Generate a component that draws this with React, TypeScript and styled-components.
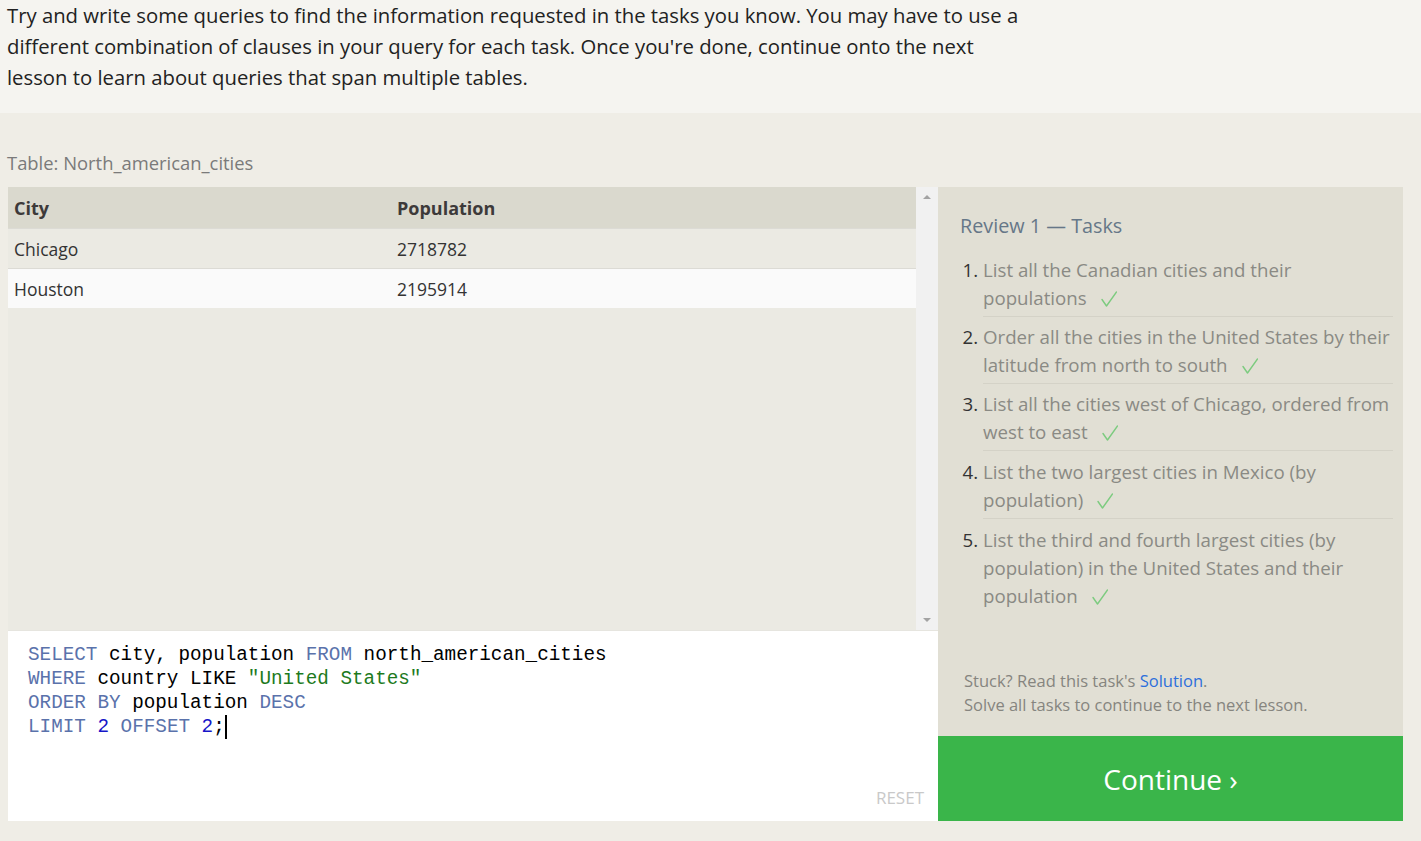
import React from "react";
import styled, { createGlobalStyle } from "styled-components";

const GlobalStyle = createGlobalStyle`
  html, body {
    margin: 0;
    padding: 0;
    background: #efede6;
    font-family: "Open Sans", "Noto Sans", sans-serif;
  }
`;

const Intro = styled.div`
  background: #f5f4f0;
  height: 113px;
  box-sizing: border-box;
  padding: 0 7px;
`;

const IntroText = styled.p`
  margin: 0;
  font-size: 20.3px;
  line-height: 31px;
  color: #222;
  width: 1018px;
`;

const Section = styled.div`
  padding: 36px 18px 20px 8px;
`;

const TableLabel = styled.div`
  font-size: 18.4px;
  color: #7a7a7a;
  margin-left: -1px;
  height: 38px;
  line-height: 27px;
`;

const Workspace = styled.div`
  display: grid;
  grid-template-columns: 930px 465px;
  grid-template-rows: 549px 85px;
`;

const LeftColumn = styled.div`
  grid-row: 1 / span 2;
  display: flex;
  flex-direction: column;
`;

const TableWrap = styled.div`
  height: 443px;
  display: flex;
  background: #ebeae3;
`;

const TableScroll = styled.div`
  flex: 1;
`;

const DataTable = styled.table`
  width: 100%;
  border-collapse: collapse;
  font-size: 17.5px;
  color: #333;
`;

const HeadCell = styled.th<{ $w?: string }>`
  text-align: left;
  font-weight: 700;
  background: #dad9ce;
  color: #3d3a3a;
  height: 41px;
  padding: 0 6px;
  width: ${(p) => p.$w || "auto"};
  font-size: 18px;
`;

const Row = styled.tr<{ $light?: boolean }>`
  background: ${(p) => (p.$light ? "#fafafa" : "#ebeae3")};
  border-top: 1px solid #dcdbd5;
`;

const Cell = styled.td`
  height: 39px;
  padding: 0 6px;
  color: #333;
`;

const Scrollbar = styled.div`
  width: 22px;
  background: #f1f1f1;
  display: flex;
  flex-direction: column;
  justify-content: space-between;
  align-items: center;
  padding: 8px 0;
  box-sizing: border-box;
`;

const Arrow = styled.div<{ $down?: boolean }>`
  width: 0;
  height: 0;
  border-left: 4px solid transparent;
  border-right: 4px solid transparent;
  ${(p) =>
    p.$down
      ? "border-top: 4px solid #a3a3a3;"
      : "border-bottom: 4px solid #a3a3a3;"}
`;

const Editor = styled.div`
  flex: 1;
  background: #fff;
  border-top: 1px solid #e6e5df;
  padding: 12px 14px 12px 20px;
  display: flex;
  flex-direction: column;
`;

const Code = styled.pre`
  margin: 0;
  font-family: "Liberation Mono", "DejaVu Sans Mono", monospace;
  font-size: 19.3px;
  line-height: 24px;
  color: #000;
  flex: 1;
`;

const Kw = styled.span`
  color: #5a72ab;
`;

const Num = styled.span`
  color: #1616c8;
`;

const Str = styled.span`
  color: #1d7a1d;
`;

const Caret = styled.span`
  display: inline-block;
  width: 2px;
  height: 24px;
  background: #000;
  vertical-align: top;
`;

const ResetButton = styled.div`
  align-self: flex-end;
  font-size: 17px;
  color: #c9c9c9;
`;

const TaskPanel = styled.div`
  background: #e1dfd4;
  padding: 24px 10px 0 22px;
  display: flex;
  flex-direction: column;
`;

const TaskTitle = styled.h3`
  margin: 0;
  font-weight: 400;
  font-size: 19.8px;
  line-height: 29px;
  color: #667788;
`;

const TaskList = styled.ol`
  margin: 16px 0 0;
  padding-left: 23px;
`;

const TaskItem = styled.li`
  font-size: 18.7px;
  line-height: 28px;
  color: #8a8a84;
  padding: 6px 0 4px;
  border-bottom: 1px solid #d4d2c7;
  &:first-child {
    padding-top: 0;
  }
  &:nth-child(n + 4) {
    padding-top: 7px;
  }
  &:last-child {
    border-bottom: none;
  }
  &::marker {
    color: #333;
  }
`;

const Check = styled.svg`
  width: 16px;
  height: 16px;
  margin-left: 14px;
  vertical-align: -2px;
`;

const Hint = styled.div`
  margin-top: auto;
  padding: 0 0 19px 4px;
  font-size: 16.5px;
  line-height: 24px;
  color: #86857f;
`;

const SolutionLink = styled.a`
  color: #2d6fdc;
  text-decoration: none;
`;

const ContinueButton = styled.button`
  border: none;
  background: #3ab54a;
  color: #fff;
  font-family: inherit;
  font-size: 28px;
  cursor: pointer;
`;

const tasks = [
  "List all the Canadian cities and their populations",
  "Order all the cities in the United States by their latitude from north to south",
  "List all the cities west of Chicago, ordered from west to east",
  "List the two largest cities in Mexico (by population)",
  "List the third and fourth largest cities (by population) in the United States and their population",
];

const CheckMark = () => (
  <Check viewBox="0 0 16 16">
    <path
      d="M1 8.5 L5.5 15 L15.5 1"
      fill="none"
      stroke="#7ccb7f"
      strokeWidth="1.4"
      strokeLinecap="round"
      strokeLinejoin="round"
    />
  </Check>
);

export default function App() {
  return (
    <>
      <GlobalStyle />
      <Intro>
        <IntroText>
          Try and write some queries to find the information requested in the
          tasks you know. You may have to use a different combination of
          clauses in your query for each task. Once you're done, continue onto
          the next lesson to learn about queries that span multiple tables.
        </IntroText>
      </Intro>
      <Section>
        <TableLabel>Table: North_american_cities</TableLabel>
        <Workspace>
          <LeftColumn>
            <TableWrap>
              <TableScroll>
                <DataTable>
                  <thead>
                    <tr>
                      <HeadCell $w="371px">City</HeadCell>
                      <HeadCell>Population</HeadCell>
                    </tr>
                  </thead>
                  <tbody>
                    <Row>
                      <Cell>Chicago</Cell>
                      <Cell>2718782</Cell>
                    </Row>
                    <Row $light>
                      <Cell>Houston</Cell>
                      <Cell>2195914</Cell>
                    </Row>
                  </tbody>
                </DataTable>
              </TableScroll>
              <Scrollbar>
                <Arrow />
                <Arrow $down />
              </Scrollbar>
            </TableWrap>
            <Editor>
              <Code>
                <Kw>SELECT</Kw> city, population <Kw>FROM</Kw>{" "}
                north_american_cities{"\n"}
                <Kw>WHERE</Kw> country LIKE <Str>"United States"</Str>
                {"\n"}
                <Kw>ORDER BY</Kw> population <Kw>DESC</Kw>
                {"\n"}
                <Kw>LIMIT</Kw> <Num>2</Num> <Kw>OFFSET</Kw> <Num>2</Num>;
                <Caret />
              </Code>
              <ResetButton>RESET</ResetButton>
            </Editor>
          </LeftColumn>
          <TaskPanel>
            <TaskTitle>Review 1 — Tasks</TaskTitle>
            <TaskList>
              {tasks.map((t) => (
                <TaskItem key={t}>
                  {t}
                  <CheckMark />
                </TaskItem>
              ))}
            </TaskList>
            <Hint>
              Stuck? Read this task's <SolutionLink href="#">Solution</SolutionLink>.
              <br />
              Solve all tasks to continue to the next lesson.
            </Hint>
          </TaskPanel>
          <ContinueButton>Continue ›</ContinueButton>
        </Workspace>
      </Section>
    </>
  );
}
